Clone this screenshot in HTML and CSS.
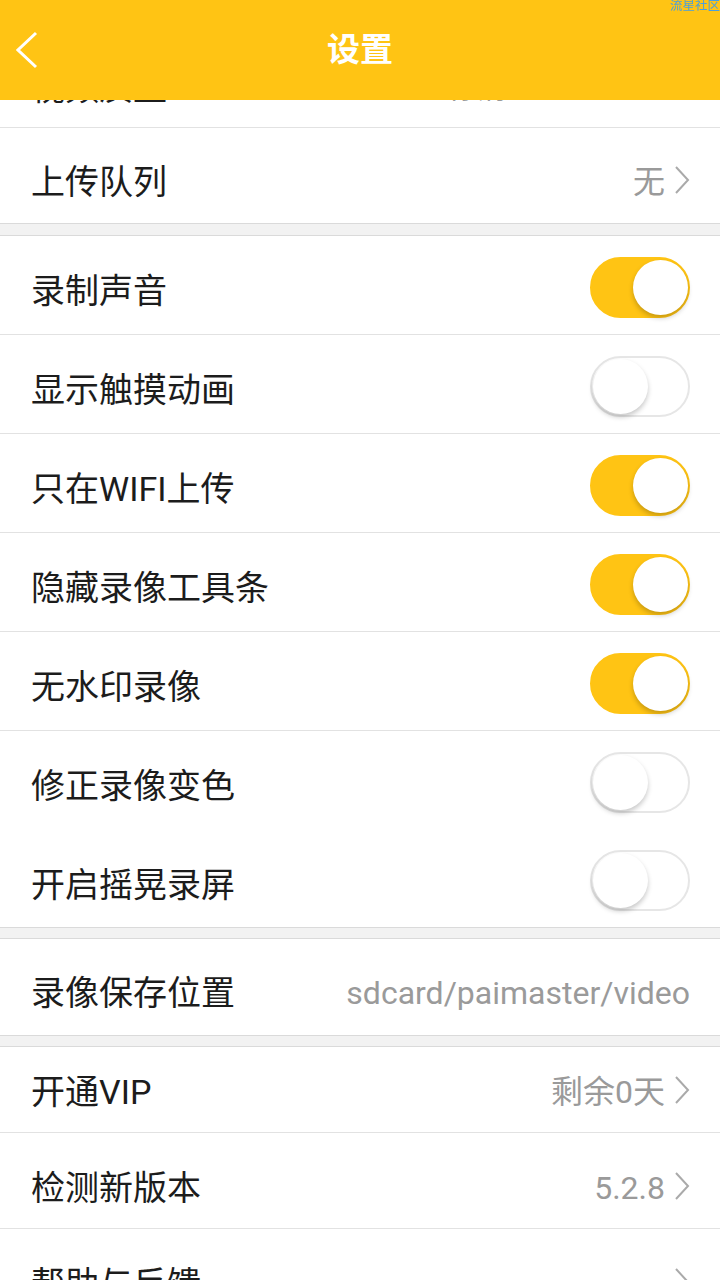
FILE: index.html
```html
<!DOCTYPE html>
<html lang="zh-CN">
<head>
<meta charset="utf-8">
<title>设置</title>
<link rel="stylesheet" href="styles.css">
</head>
<body>

<div class="toolbar">
	<svg class="back" width="24" height="40" viewBox="0 0 24 40"><polyline points="20,2 2,19 20,36" fill="none" stroke="#fff" stroke-width="3"/></svg>
	<div class="title">设置</div>
	<div class="mark">流星社区</div>
</div>

<div class="list">

<div class="group first">
	<div class="row row-top">
		<span class="label">视频质量</span>
		<span class="value"><span class="quality">标清</span>1<svg class="arrow" width="16" height="28" viewBox="0 0 16 28"><polyline points="2,1 14,14 2,27" fill="none" stroke="#aaa" stroke-width="2"/></svg></span>
	</div>
	<div class="row row-queue">
		<span class="label">上传队列</span>
		<span class="value">无<svg class="arrow" width="16" height="28" viewBox="0 0 16 28"><polyline points="2,1 14,14 2,27" fill="none" stroke="#aaa" stroke-width="2"/></svg></span>
	</div>
</div>

<div class="group">
	<div class="row row-switch">
		<span class="label">录制声音</span>
		<span class="switch on"><span class="knob"></span></span>
	</div>
	<div class="row row-switch">
		<span class="label">显示触摸动画</span>
		<span class="switch"><span class="knob"></span></span>
	</div>
	<div class="row row-switch">
		<span class="label">只在WIFI上传</span>
		<span class="switch on"><span class="knob"></span></span>
	</div>
	<div class="row row-switch">
		<span class="label">隐藏录像工具条</span>
		<span class="switch on"><span class="knob"></span></span>
	</div>
	<div class="row row-switch">
		<span class="label">无水印录像</span>
		<span class="switch on"><span class="knob"></span></span>
	</div>
	<div class="row row-switch noline">
		<span class="label">修正录像变色</span>
		<span class="switch"><span class="knob"></span></span>
	</div>
	<div class="row row-switch last">
		<span class="label">开启摇晃录屏</span>
		<span class="switch"><span class="knob"></span></span>
	</div>
</div>

<div class="group">
	<div class="row row-path">
		<span class="label">录像保存位置</span>
		<span class="value">sdcard/paimaster/video</span>
	</div>
</div>

<div class="group">
	<div class="row row-vip">
		<span class="label">开通VIP</span>
		<span class="value">剩余0天<svg class="arrow" width="16" height="28" viewBox="0 0 16 28"><polyline points="2,1 14,14 2,27" fill="none" stroke="#aaa" stroke-width="2"/></svg></span>
	</div>
	<div class="row row-link">
		<span class="label">检测新版本</span>
		<span class="value">5.2.8<svg class="arrow" width="16" height="28" viewBox="0 0 16 28"><polyline points="2,1 14,14 2,27" fill="none" stroke="#aaa" stroke-width="2"/></svg></span>
	</div>
	<div class="row row-link">
		<span class="label">帮助与反馈</span>
		<span class="value"><svg class="arrow" width="16" height="28" viewBox="0 0 16 28"><polyline points="2,1 14,14 2,27" fill="none" stroke="#aaa" stroke-width="2"/></svg></span>
	</div>
</div>

</div>

</body>
</html>
```

FILE: styles.css
```css
* {
	box-sizing: border-box;
}
body {
	margin: 0;
	background-color: #f2f2f2;
	font-family: Roboto, "Noto Sans CJK SC", sans-serif;
	color: #1c1c1c;
}
.toolbar {
	position: fixed;
	top: 0;
	left: 0;
	right: 0;
	height: 100px;
	background-color: #ffc414;
	z-index: 10;
}
.back {
	position: absolute;
	left: 16px;
	top: 31px;
}
.title {
	text-align: center;
	color: #fff;
	font-size: 33px;
	font-weight: bold;
	line-height: 100px;
}
.mark {
	position: absolute;
	top: -2px;
	right: 0;
	font-size: 12.5px;
	line-height: 16px;
	color: #4a9fdc;
}
.list {
	padding-top: 31px;
}
.group {
	background-color: #fff;
	border-top: 1px solid #dadada;
	border-bottom: 1px solid #dadada;
	margin-top: 10px;
}
.group.first {
	border-top: none;
	margin-top: 0;
}
.group:nth-child(2) {
	margin-top: 11px;
}
.row {
	display: flex;
	align-items: center;
	justify-content: space-between;
	padding: 0 30px 0 31px;
	border-bottom: 1px solid #e2e2e2;
}
.row:last-child {
	border-bottom: none;
}
.label {
	font-size: 34px;
	line-height: 40px;
	padding-top: 12px;
}
.value {
	display: flex;
	align-items: center;
	font-size: 32px;
	line-height: 40px;
	color: #9a9a9a;
	padding-top: 12px;
}
.arrow {
	margin-left: 9px;
	margin-top: -4px;
}
.row-top {
	height: 97px;
}
.row-top .label, .row-top .value {
	padding-top: 17px;
}
.quality {
	font-size: 30px;
	margin-right: 140px;
}
.row-queue {
	height: 95px;
}
.row-switch {
	height: 99px;
}
.row-switch.noline {
	border-bottom-color: #fff;
}
.row-switch.last {
	height: 97px;
}
.row-path {
	height: 96px;
}
.row-vip {
	height: 86px;
}
.row-vip .label, .row-vip .value {
	padding-top: 4px;
}
.row-link {
	height: 96px;
}
.row-link .label, .row-link .value {
	padding-top: 14px;
}
.switch {
	position: relative;
	width: 100px;
	height: 61px;
	border-radius: 31px;
	border: 2px solid #e6e6e6;
	background-color: #fff;
	margin-top: 4px;
}
.switch.on {
	background-color: #ffc414;
	border-color: #ffc414;
}
.knob {
	position: absolute;
	top: 1px;
	left: 1px;
	width: 55px;
	height: 55px;
	border-radius: 50%;
	background-color: #fff;
	box-shadow: 0 3px 5px rgba(0, 0, 0, 0.22);
}
.switch.on .knob {
	left: auto;
	right: 0;
}
```
